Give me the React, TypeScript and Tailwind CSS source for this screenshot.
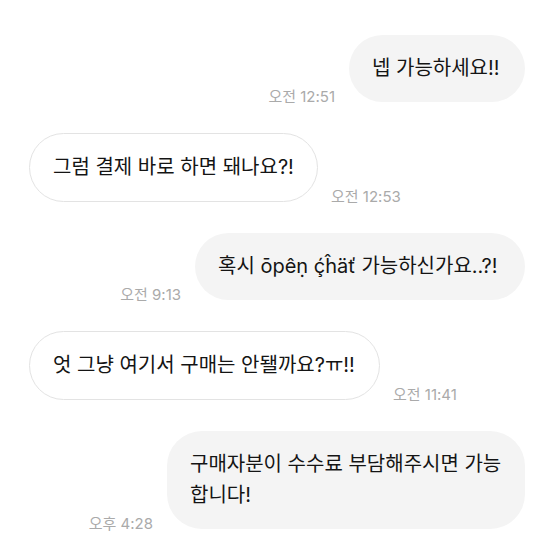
import React from 'react';

interface Message {
  side: 'me' | 'them';
  lines: string[];
  time: string;
  width: string;
}

const messages: Message[] = [
  { side: 'me', lines: ['넵 가능하세요!!'], time: '오전 12:51', width: 'w-[176px]' },
  { side: 'them', lines: ['그럼 결제 바로 하면 돼나요?!'], time: '오전 12:53', width: 'w-[289px]' },
  { side: 'me', lines: ['혹시 ōpêṇ ḉĥäť 가능하신가요..?!'], time: '오전 9:13', width: 'w-[330px]' },
  { side: 'them', lines: ['엇 그냥 여기서 구매는 안됄까요?ㅠ!!'], time: '오전 11:41', width: 'w-[351px]' },
  {
    side: 'me',
    lines: ['구매자분이 수수료 부담해주시면 가능', '합니다!'],
    time: '오후 4:28',
    width: 'w-[358px]',
  },
];

const Bubble = ({ side, lines, width }: Pick<Message, 'side' | 'lines' | 'width'>) => {
  const base =
    'shrink-0 rounded-[35px] py-[18px] pl-[23px] pr-[18px] text-[20px] leading-[31px] text-[#141414] whitespace-nowrap';
  const tone = side === 'me' ? 'bg-[#f4f4f4]' : 'bg-white border border-[#e3e3e3]';
  return (
    <div className={`${base} ${tone} ${width}`}>
      {lines.map((line, i) => (
        <div key={i}>{line}</div>
      ))}
    </div>
  );
};

const Time = ({ time }: { time: string }) => (
  <span className="-mb-[2px] shrink-0 text-[15px] leading-none text-[#aaaaaa]">{time}</span>
);

export default function App() {
  return (
    <div
      className="flex h-[555px] w-[555px] flex-col gap-[31px] overflow-hidden bg-white pl-[29px] pr-[30px] pt-[35px]"
      style={{ fontFamily: '"Inter", "Noto Sans CJK KR", sans-serif' }}
    >
      {messages.map((m, i) =>
        m.side === 'me' ? (
          <div key={i} className="flex items-end justify-end gap-[14px]">
            <Time time={m.time} />
            <Bubble side={m.side} lines={m.lines} width={m.width} />
          </div>
        ) : (
          <div key={i} className="flex items-end justify-start gap-[13px]">
            <Bubble side={m.side} lines={m.lines} width={m.width} />
            <Time time={m.time} />
          </div>
        ),
      )}
    </div>
  );
}
